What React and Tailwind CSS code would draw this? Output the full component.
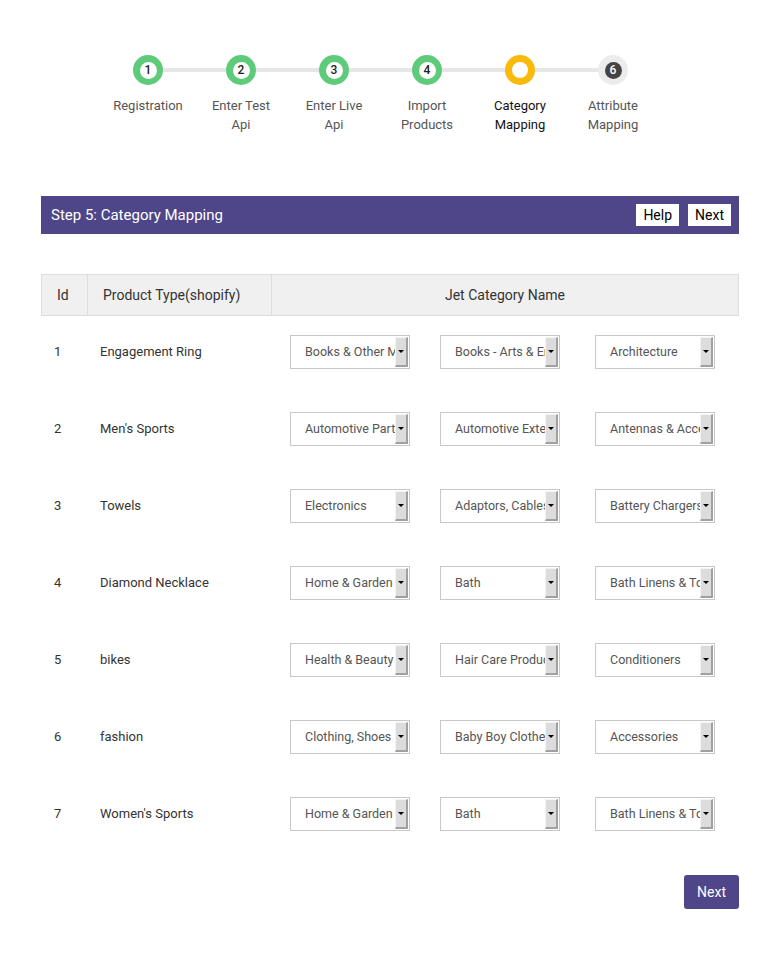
import React from "react";

const steps = [
  { n: "1", label: ["Registration"], state: "done" },
  { n: "2", label: ["Enter Test", "Api"], state: "done" },
  { n: "3", label: ["Enter Live", "Api"], state: "done" },
  { n: "4", label: ["Import", "Products"], state: "done" },
  { n: "5", label: ["Category", "Mapping"], state: "active" },
  { n: "6", label: ["Attribute", "Mapping"], state: "todo" },
];

const rows = [
  ["1", "Engagement Ring", "Books & Other Media", "Books - Arts & Entertainment", "Architecture"],
  ["2", "Men's Sports", "Automotive Parts & Accessories", "Automotive Exterior", "Antennas & Accessories"],
  ["3", "Towels", "Electronics", "Adaptors, Cables", "Battery Chargers"],
  ["4", "Diamond Necklace", "Home & Garden", "Bath", "Bath Linens & Towels"],
  ["5", "bikes", "Health & Beauty", "Hair Care Products", "Conditioners"],
  ["6", "fashion", "Clothing, Shoes & Accessories", "Baby Boy Clothes", "Accessories"],
  ["7", "Women's Sports", "Home & Garden", "Bath", "Bath Linens & Towels"],
];

function Circle({ n, state }) {
  if (state === "done") {
    return (
      <div className="w-[30px] h-[30px] rounded-full bg-[#5ecb7a] flex items-center justify-center">
        <div className="w-[17px] h-[17px] rounded-full bg-white flex items-center justify-center text-[12px] font-medium text-[#222] leading-none">
          {n}
        </div>
      </div>
    );
  }
  if (state === "active") {
    return (
      <div className="w-[30px] h-[30px] rounded-full bg-[#f8bb0c] flex items-center justify-center">
        <div className="w-[16px] h-[16px] rounded-full bg-white" />
      </div>
    );
  }
  return (
    <div className="w-[30px] h-[30px] rounded-full bg-[#ececec] flex items-center justify-center">
      <div className="w-[17px] h-[17px] rounded-full bg-[#444] flex items-center justify-center text-[12px] font-medium text-white leading-none">
        {n}
      </div>
    </div>
  );
}

function Select({ value, className = "" }) {
  return (
    <div className={"w-[120px] h-[34px] border border-[#c8c8c8] bg-white flex items-stretch " + className}>
      <div className="flex-1 overflow-hidden whitespace-nowrap pl-[14px] text-[12.5px] text-[#555] leading-[32px]">
        {value}
      </div>
      <div className="w-[13px] my-[1px] mr-[1px] bg-[#dcdcdc] border-t border-l border-t-[#f4f4f4] border-l-[#f4f4f4] border-r-2 border-b-2 border-r-[#a0a0a0] border-b-[#a0a0a0] flex items-center justify-center">
        <div className="w-0 h-0 border-l-[3px] border-r-[3px] border-t-[3px] border-l-transparent border-r-transparent border-t-black" />
      </div>
    </div>
  );
}

export default function App() {
  return (
    <div className="w-[775px] min-h-[954px] bg-white font-['Roboto',sans-serif] text-[#333]">
      {/* Steps */}
      <div className="pt-[55px] flex justify-center">
        <div className="relative flex ml-[-14px]">
          <div className="absolute left-[46px] right-[46px] top-[13px] h-[4px] bg-[#e6e6e6]" />
          {steps.map((s) => (
            <div key={s.n} className="relative w-[93px] flex flex-col items-center">
              <Circle n={s.n} state={s.state} />
              <div
                className={
                  "mt-[11px] text-[13px] leading-[19px] text-center " +
                  (s.state === "active" ? "text-[#111]" : "text-[#555]")
                }
              >
                {s.label.map((l) => (
                  <div key={l}>{l}</div>
                ))}
              </div>
            </div>
          ))}
        </div>
      </div>

      <div className="ml-[41px] w-[698px] mt-[62px]">
        {/* Header bar */}
        <div className="h-[38px] bg-[#4f4589] flex items-center justify-between pl-[10px] pr-[8px]">
          <div className="text-white text-[15px]">Step 5: Category Mapping</div>
          <div className="flex gap-[9px]">
            <div className="bg-white text-black text-[14px] h-[22px] px-[7px] leading-[22px]">Help</div>
            <div className="bg-white text-black text-[14px] h-[22px] px-[7px] leading-[22px]">Next</div>
          </div>
        </div>

        {/* Table */}
        <div className="mt-[40px]">
          <div className="flex h-[42px] bg-[#f0f0f0] border border-[#dddddd] text-[14px] text-[#333]">
            <div className="w-[46px] border-r border-[#dddddd] flex items-center pl-[15px]">Id</div>
            <div className="w-[184px] border-r border-[#dddddd] flex items-center pl-[15px]">Product Type(shopify)</div>
            <div className="flex-1 flex items-center justify-center">Jet Category Name</div>
          </div>
          {rows.map((r) => (
            <div key={r[0]} className="flex items-center pt-[19px] pb-[24px] text-[13px] text-[#333]">
              <div className="w-[47px] pl-[13px]">{r[0]}</div>
              <div className="w-[184px] pl-[12px]">{r[1]}</div>
              <div className="flex pl-[18px]">
                <Select value={r[2]} />
                <Select value={r[3]} className="ml-[30px]" />
                <Select value={r[4]} className="ml-[35px]" />
              </div>
            </div>
          ))}
        </div>

        <div className="flex justify-end mt-[20px]">
          <div className="h-[34px] px-[13px] bg-[#4f4589] text-white text-[14px] rounded-[3px] leading-[34px]">Next</div>
        </div>
      </div>
    </div>
  );
}
